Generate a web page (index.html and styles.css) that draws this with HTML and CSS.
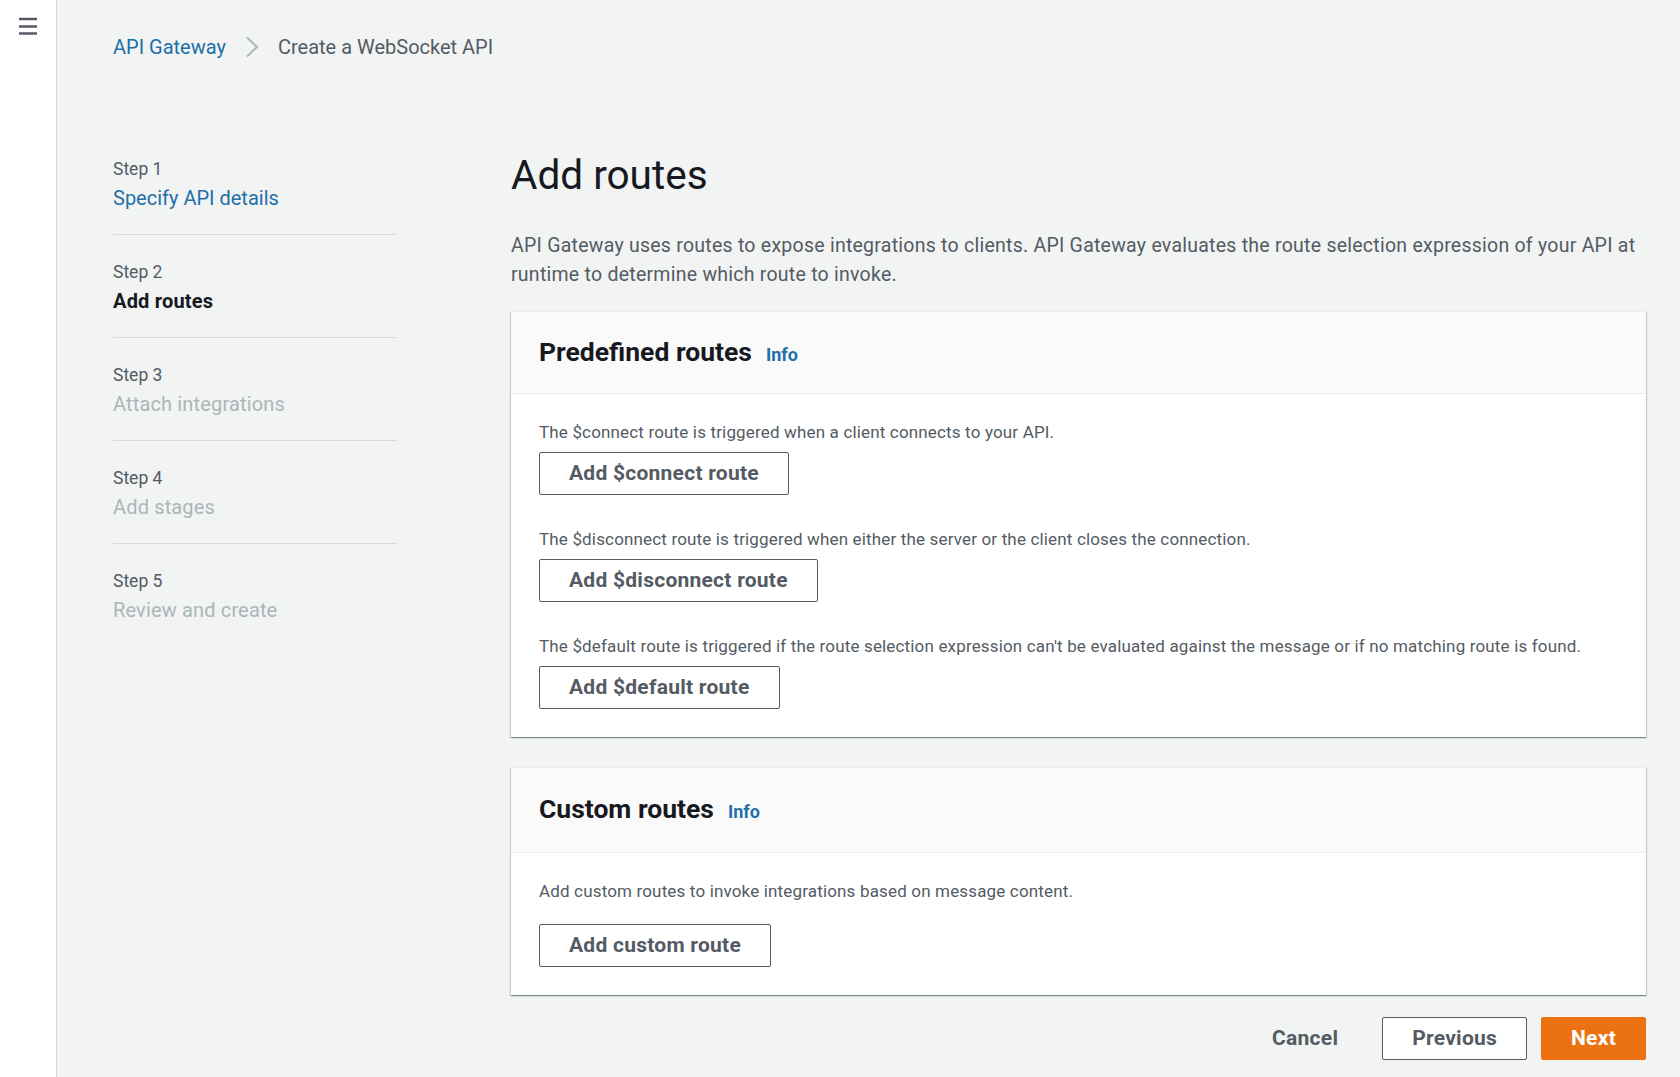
FILE: index.html
```html
<!DOCTYPE html>
<html lang="en">
<head>
<meta charset="utf-8">
<title>Create a WebSocket API</title>
<link rel="stylesheet" href="styles.css">
</head>
<body>
<div class="app">
  <nav class="side-nav">
    <button class="menu-btn" aria-label="Open navigation">
      <svg width="20" height="18" viewBox="0 0 20 18"><path d="M1 2h18M1 9.5h18M1 16.5h18" stroke="#545b64" stroke-width="2.4" fill="none"/></svg>
    </button>
  </nav>
  <main class="main">
    <div class="breadcrumb">
      <a class="crumb-link" href="#">API Gateway</a>
      <svg class="crumb-sep" width="14" height="22" viewBox="0 0 14 22"><path d="M2 1.5l10 9.5-10 9.5" stroke="#aab7b8" stroke-width="2" fill="none"/></svg>
      <span class="crumb-current">Create a WebSocket API</span>
    </div>
    <div class="wizard">
      <ol class="steps">
        <li class="step">
          <div class="step-num">Step 1</div>
          <a class="step-title link" href="#">Specify API details</a>
        </li>
        <li class="step">
          <div class="step-num">Step 2</div>
          <div class="step-title active">Add routes</div>
        </li>
        <li class="step">
          <div class="step-num">Step 3</div>
          <div class="step-title disabled">Attach integrations</div>
        </li>
        <li class="step">
          <div class="step-num">Step 4</div>
          <div class="step-title disabled">Add stages</div>
        </li>
        <li class="step last">
          <div class="step-num">Step 5</div>
          <div class="step-title disabled">Review and create</div>
        </li>
      </ol>
      <section class="content">
        <h1 class="page-title">Add routes</h1>
        <p class="page-desc">API Gateway uses routes to expose integrations to clients. API Gateway evaluates the route selection expression of your API at runtime to determine which route to invoke.</p>

        <div class="card">
          <div class="card-header">
            <h2 class="card-title">Predefined routes</h2>
            <a class="info" href="#">Info</a>
          </div>
          <div class="card-body">
            <div class="route-item">
              <p class="route-text">The $connect route is triggered when a client connects to your API.</p>
              <button class="btn">Add $connect route</button>
            </div>
            <div class="route-item">
              <p class="route-text">The $disconnect route is triggered when either the server or the client closes the connection.</p>
              <button class="btn">Add $disconnect route</button>
            </div>
            <div class="route-item">
              <p class="route-text">The $default route is triggered if the route selection expression can't be evaluated against the message or if no matching route is found.</p>
              <button class="btn">Add $default route</button>
            </div>
          </div>
        </div>

        <div class="card">
          <div class="card-header tall">
            <h2 class="card-title">Custom routes</h2>
            <a class="info" href="#">Info</a>
          </div>
          <div class="card-body">
            <div class="route-item custom">
              <p class="route-text">Add custom routes to invoke integrations based on message content.</p>
              <button class="btn">Add custom route</button>
            </div>
          </div>
        </div>

        <div class="actions">
          <button class="btn btn-link">Cancel</button>
          <button class="btn">Previous</button>
          <button class="btn btn-primary">Next</button>
        </div>
      </section>
    </div>
  </main>
</div>
</body>
</html>
```
FILE: styles.css
```css
* { box-sizing: border-box; }
html, body { margin: 0; padding: 0; }
body {
  background: #f2f3f3;
  font-family: Roboto, "Liberation Sans", Arial, sans-serif;
  color: #545b64;
}
.app {
  display: flex;
  min-height: 1077px;
}
.side-nav {
  width: 57px;
  flex: none;
  background: #ffffff;
  border-right: 1px solid #d5dbdb;
}
.menu-btn {
  margin: 17px 0 0 18px;
  padding: 0;
  border: 0;
  background: none;
  display: block;
  line-height: 0;
}
.main {
  flex: 1;
  padding: 35px 34px 0 56px;
}
.breadcrumb {
  display: flex;
  align-items: center;
  height: 24px;
  font-size: 20px;
}
.crumb-link {
  color: #1f6fa8;
  text-decoration: none;
}
.crumb-sep {
  margin: 0 19px 0 19px;
}
.crumb-current {
  color: #545b64;
  font-size: 20px;
}
.wizard {
  display: grid;
  grid-template-columns: 284px 1fr;
  column-gap: 114px;
  margin-top: 92px;
}
.steps {
  list-style: none;
  margin: 0;
  padding: 7px 0 0 0;
}
.step {
  padding: 0 0 22px 0;
  margin-bottom: 26px;
  border-bottom: 1px solid #d5dbdb;
}
.step.last {
  border-bottom: 0;
}
.step-num {
  font-size: 17.5px;
  line-height: 22px;
  color: #545b64;
}
.step-title {
  display: block;
  margin-top: 4px;
  font-size: 20px;
  line-height: 28px;
  text-decoration: none;
}
.step-title.link { color: #1f6fa8; }
.step-title.active { color: #16191f; font-weight: 700; letter-spacing: 0.2px; }
.step-title.disabled { color: #aab7b8; letter-spacing: 0.15px; }

.page-title {
  margin: 0;
  font-size: 40.5px;
  line-height: 48px;
  font-weight: 400;
  color: #16191f;
}
.page-desc {
  margin: 32px 0 22px 0;
  font-size: 19.5px;
  letter-spacing: 0.25px;
  line-height: 29px;
  color: #545b64;
}
.card {
  background: #ffffff;
  border-top: 1px solid #eaeded;
  box-shadow: 0 1px 1px 0 rgba(0, 28, 36, 0.3), 1px 1px 1px 0 rgba(0, 28, 36, 0.15), -1px 1px 1px 0 rgba(0, 28, 36, 0.15);
  margin-bottom: 30px;
}
.card-header {
  display: flex;
  align-items: baseline;
  gap: 14px;
  padding: 24px 28px 25px 28px;
  background: #fafafa;
  border-bottom: 1px solid #eaeded;
}
.card-header.tall {
  padding-top: 25px;
  padding-bottom: 27px;
}
.card-title {
  margin: 0;
  font-size: 26.5px;
  line-height: 32px;
  font-weight: 700;
  color: #16191f;
}
.info {
  font-size: 18px;
  font-weight: 700;
  color: #1f6fa8;
  text-decoration: none;
}
.card-body {
  padding: 27px 28px 28px 28px;
}
.route-item + .route-item {
  margin-top: 33px;
}
.route-text {
  margin: 0 0 9px 0;
  font-size: 17px;
  letter-spacing: 0.16px;
  line-height: 22px;
  color: #545b64;
}
.route-item.custom .route-text {
  margin-bottom: 22px;
}
.btn {
  display: inline-block;
  height: 43px;
  padding: 0 29px;
  border: 1px solid #545b64;
  border-radius: 2px;
  background: #ffffff;
  color: #545b64;
  font-family: Roboto, "Liberation Sans", Arial, sans-serif;
  font-size: 21px;
  letter-spacing: 0.25px;
  font-weight: 700;
  line-height: 41px;
  cursor: pointer;
}
.actions {
  display: flex;
  justify-content: flex-end;
  align-items: center;
  gap: 14px;
  margin-top: -8px;
}
.btn-link {
  border-color: transparent;
  background: transparent;
}
.btn-primary {
  background: #ec7211;
  border-color: #ec7211;
  color: #ffffff;
}
```
